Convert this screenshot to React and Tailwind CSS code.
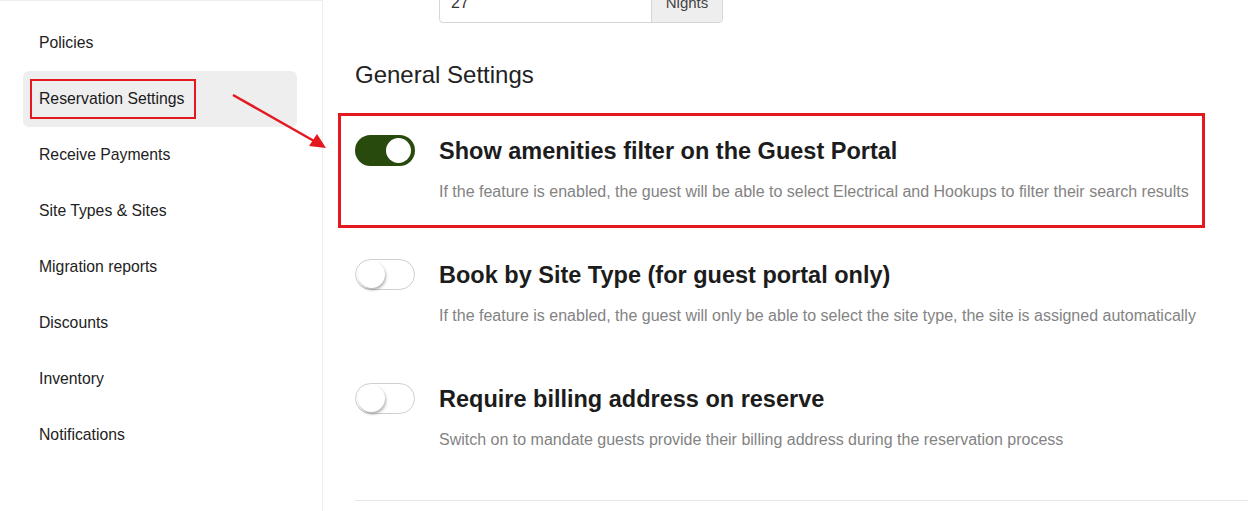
import React from 'react';

const navItems = [
  'Policies',
  'Reservation Settings',
  'Receive Payments',
  'Site Types & Sites',
  'Migration reports',
  'Discounts',
  'Inventory',
  'Notifications',
];

const settings = [
  {
    title: 'Show amenities filter on the Guest Portal',
    desc: 'If the feature is enabled, the guest will be able to select Electrical and Hookups to filter their search results',
    on: true,
    highlight: true,
  },
  {
    title: 'Book by Site Type (for guest portal only)',
    desc: 'If the feature is enabled, the guest will only be able to select the site type, the site is assigned automatically',
    on: false,
  },
  {
    title: 'Require billing address on reserve',
    desc: 'Switch on to mandate guests provide their billing address during the reservation process',
    on: false,
  },
];

const Toggle = ({ on }) =>
  on ? (
    <div className="w-[60px] h-[31px] shrink-0 rounded-full bg-[#284a0c] flex items-center justify-end pr-[4px]">
      <div className="w-[25px] h-[25px] rounded-full bg-white" />
    </div>
  ) : (
    <div className="w-[60px] h-[31px] shrink-0 rounded-full bg-white border border-[#cfcfcf] flex items-center pl-[2px]">
      <div className="w-[27px] h-[27px] rounded-full bg-white shadow-[1px_2px_3px_rgba(0,0,0,0.3)]" />
    </div>
  );

export default function App() {
  return (
    <div
      className="relative flex h-[511px] w-[1248px] overflow-hidden bg-white text-[#222]"
      style={{ fontFamily: '"Liberation Sans", Arial, sans-serif' }}
    >
      {/* Sidebar */}
      <aside className="w-[323px] shrink-0 border-r border-t border-[#eee] pt-[14px] pl-[23px] pr-[25px]">
        {navItems.map((item) => {
          const active = item === 'Reservation Settings';
          return (
            <div
              key={item}
              className={`relative h-[56px] flex items-center pl-[16px] rounded-md text-[15.75px] ${active ? 'bg-[#eeeeee] text-[#1a1a1a]' : ''}`}
            >
              {item}
              {active && (
                <div className="absolute left-[7px] top-[8px] w-[166px] h-[40px] border-[2.5px] border-[#e3191f]" />
              )}
            </div>
          );
        })}
      </aside>

      {/* Main */}
      <main className="flex-1 pl-[32px]">
        <div className="-mt-[17px] ml-[84px] w-[284px] h-[40px] flex border border-[#d6d6d6] rounded-[4px] overflow-hidden">
          <div className="flex-1 flex items-center pl-[11px] text-[16px] text-[#333]">27</div>
          <div className="w-[71px] bg-[#eeeeee] border-l border-[#d6d6d6] flex items-center justify-center text-[15px] text-[#444]">
            Nights
          </div>
        </div>

        <h2 className="mt-[36px] text-[24px] leading-[32px] font-normal text-[#222]">General Settings</h2>

        <div className="mt-[22px]">
          {settings.map((s) => (
            <div key={s.title} className="relative h-[124px] pt-[22px] flex gap-[24px]">
              <Toggle on={s.on} />
              <div>
                <div className="text-[23.5px] leading-[32px] font-bold text-[#1c1c1c]">{s.title}</div>
                <div className="mt-[14px] text-[16px] leading-[22px] text-[#838383]">{s.desc}</div>
              </div>
              {s.highlight && (
                <div className="absolute -left-[17px] top-0 w-[867px] h-[115px] border-[3px] border-[#e3191f]" />
              )}
            </div>
          ))}
        </div>

        <div className="mt-[15px] border-t border-[#e8e8e8]" />
      </main>

      {/* Annotation arrow */}
      <svg className="absolute left-0 top-0 pointer-events-none" width="1248" height="511">
        <line x1="233" y1="95" x2="314" y2="141" stroke="#e3191f" strokeWidth="2.5" />
        <polygon points="326,148 309,146 317,134" fill="#e3191f" />
      </svg>
    </div>
  );
}
